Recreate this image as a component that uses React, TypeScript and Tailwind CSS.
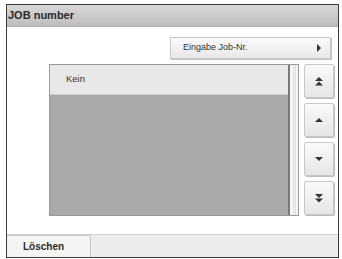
import React from 'react';

const Tri: React.FC<{ dir: 'up' | 'down' | 'right'; double?: boolean }> = ({ dir, double }) => {
  if (dir === 'right') {
    return (
      <svg width="6" height="8" viewBox="0 0 6 8">
        <path d="M1 0 L5 4 L1 8 Z" fill="#333" />
      </svg>
    );
  }
  const up = dir === 'up';
  const one = (y: number) => (up ? `M1 ${y + 4} L5 ${y} L9 ${y + 4} Z` : `M1 ${y} L5 ${y + 4} L9 ${y} Z`);
  return (
    <svg width="10" height={double ? 9 : 5} viewBox={`0 0 10 ${double ? 9 : 5}`}>
      <path d={one(0)} fill="#333" />
      {double && <path d={one(4.5)} fill="#333" />}
    </svg>
  );
};

const SideButton: React.FC<{ children: React.ReactNode }> = ({ children }) => (
  <div className="h-[34px] w-[30px] flex items-center justify-center rounded-[2px] border border-[#c8c8c8] bg-gradient-to-b from-[#fafafa] to-[#e6e6e6] shadow-[1px_1px_0_#bdbdbd]">
    {children}
  </div>
);

const App: React.FC = () => {
  return (
    <div className="w-[342px] h-[259px] bg-white overflow-hidden pt-[4px] pl-[6px]" style={{ fontFamily: '"Liberation Sans", Arial, sans-serif' }}>
      <div className="w-[333px] h-[254px] border border-[#3a3a3a] flex flex-col bg-white">
        <div className="h-[22px] flex items-center pl-[1px] bg-gradient-to-b from-[#d8d8d8] to-[#bdbdbd] border-b border-[#b0b0b0]">
          <span className="text-[11px] font-bold text-[#2a2a2a]">JOB number</span>
        </div>
        <div className="flex-1 flex flex-col">
          <div className="flex pt-[10px] pl-[163px]">
            <div className="w-[161px] h-[22px] flex items-center justify-between pl-[12px] pr-[8px] border border-[#c8c8c8] bg-gradient-to-b from-[#fbfbfb] to-[#e8e8e8] shadow-[1px_1px_0_#c4c4c4]">
              <span className="text-[9px] text-[#333]">Eingabe Job-Nr.</span>
              <Tri dir="right" />
            </div>
          </div>
          <div className="flex pt-[5px] pl-[42px] gap-[5px]">
            <div className="w-[250px] h-[152px] flex border border-[#9a9a9a]">
              <div className="flex-1 flex flex-col bg-[#a9a9a9]">
                <div className="h-[30px] flex items-center pl-[16px] bg-[#e8e8e8] border-b border-[#cfcfcf]">
                  <span className="text-[9.5px] text-[#333]">Kein</span>
                </div>
              </div>
              <div className="w-[10px] bg-[#f6f6f6] border-l-2 border-[#7a7a7a] flex justify-center">
                <div className="w-[3px] h-full border-x border-[#dcdcdc]" />
              </div>
            </div>
            <div className="flex flex-col gap-[5px]">
              <SideButton><Tri dir="up" double /></SideButton>
              <SideButton><Tri dir="up" /></SideButton>
              <SideButton><Tri dir="down" /></SideButton>
              <SideButton><Tri dir="down" double /></SideButton>
            </div>
          </div>
        </div>
        <div className="h-[23px] flex items-end bg-[#ececec] border-t border-[#d2d2d2]">
          <div className="w-[84px] h-[22px] flex items-center pl-[16px] bg-[#f4f4f4] border-r border-t border-[#c4c4c4] rounded-tr-[2px]">
            <span className="text-[10px] font-bold text-[#2a2a2a]">Löschen</span>
          </div>
        </div>
      </div>
    </div>
  );
};

export default App;
